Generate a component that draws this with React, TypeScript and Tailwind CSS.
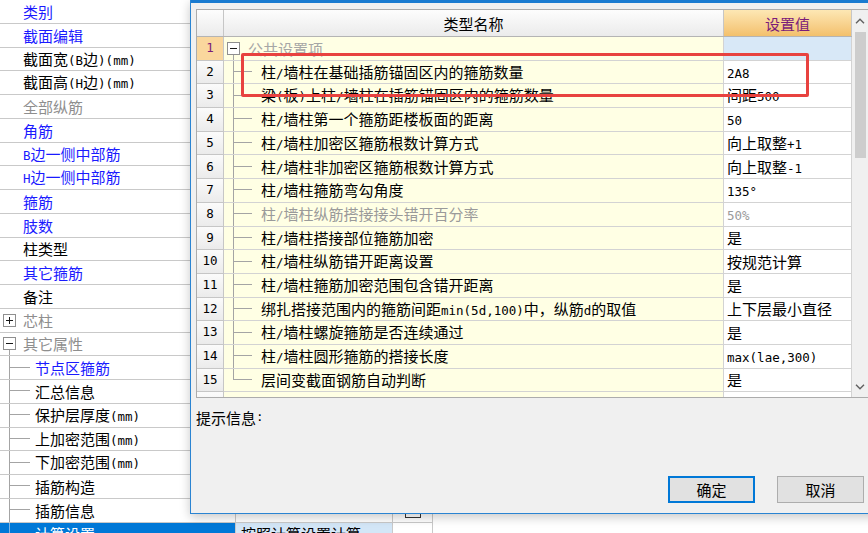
import React from 'react';

const MONO = "font-['DejaVu_Sans_Mono',monospace] text-[12.5px]";

function Mixed({ s }: { s: string }) {
  const parts = s.split(/([\x20-\x7e°]+)/).filter((p) => p !== '');
  return (
    <>
      {parts.map((p, i) =>
        /^[\x20-\x7e°]+$/.test(p) ? (
          <span key={i} className={MONO}>
            {p}
          </span>
        ) : (
          <span key={i}>{p}</span>
        )
      )}
    </>
  );
}

function ToggleBox({ plus, lineBelow, lineColor }: { plus?: boolean; lineBelow?: boolean; lineColor: string }) {
  return (
    <div className="flex h-full w-[13px] shrink-0 flex-col items-center">
      <div className="flex-1" />
      <svg width="13" height="13" viewBox="0 0 13 13" className="shrink-0">
        <rect x="0.5" y="0.5" width="12" height="12" fill="#ffffff" stroke="#8f8f8f" />
        <path d="M3 6.5h7" stroke="#1a1a1a" strokeWidth="1" />
        {plus && <path d="M6.5 3v7" stroke="#1a1a1a" strokeWidth="1" />}
      </svg>
      <div className={`w-px flex-1 ${lineBelow ? lineColor : ''}`} />
    </div>
  );
}

function Branch({ width, color, last }: { width: string; color: string; last?: boolean }) {
  return (
    <div className={`flex h-full shrink-0 flex-col ${width}`}>
      <div className={`h-1/2 border-b border-l ${color}`} />
      <div className={`flex-1 ${last ? '' : `border-l ${color}`}`} />
    </div>
  );
}

type LeftRow = {
  t: string;
  c?: 'blue' | 'black' | 'gray';
  box?: '+' | '-';
  child?: boolean;
  check?: boolean;
  selected?: boolean;
  value?: string;
};

const leftRows: LeftRow[] = [
  { t: '类别', c: 'blue' },
  { t: '截面编辑', c: 'blue' },
  { t: '截面宽(B边)(mm)', c: 'black' },
  { t: '截面高(H边)(mm)', c: 'black' },
  { t: '全部纵筋', c: 'gray' },
  { t: '角筋', c: 'blue' },
  { t: 'B边一侧中部筋', c: 'blue' },
  { t: 'H边一侧中部筋', c: 'blue' },
  { t: '箍筋', c: 'blue' },
  { t: '肢数', c: 'blue' },
  { t: '柱类型', c: 'black' },
  { t: '其它箍筋', c: 'blue' },
  { t: '备注', c: 'black' },
  { t: '芯柱', c: 'gray', box: '+' },
  { t: '其它属性', c: 'gray', box: '-' },
  { t: '节点区箍筋', c: 'blue', child: true },
  { t: '汇总信息', c: 'black', child: true },
  { t: '保护层厚度(mm)', c: 'black', child: true },
  { t: '上加密范围(mm)', c: 'black', child: true },
  { t: '下加密范围(mm)', c: 'black', child: true },
  { t: '插筋构造', c: 'black', child: true },
  { t: '插筋信息', c: 'black', child: true, check: true },
  { t: '计算设置', c: 'black', child: true, selected: true, value: '按照计算设置计算' },
];

const colorCls = {
  blue: 'text-[#1a1aff]',
  black: 'text-black',
  gray: 'text-[#8e8e8e]',
};

type DRow = { n: number; name: string; value: string; group?: boolean; dim?: boolean };

const dRows: DRow[] = [
  { n: 1, name: '公共设置项', value: '', group: true },
  { n: 2, name: '柱/墙柱在基础插筋锚固区内的箍筋数量', value: '2A8' },
  { n: 3, name: '梁(板)上柱/墙柱在插筋锚固区内的箍筋数量', value: '间距500' },
  { n: 4, name: '柱/墙柱第一个箍筋距楼板面的距离', value: '50' },
  { n: 5, name: '柱/墙柱加密区箍筋根数计算方式', value: '向上取整+1' },
  { n: 6, name: '柱/墙柱非加密区箍筋根数计算方式', value: '向上取整-1' },
  { n: 7, name: '柱/墙柱箍筋弯勾角度', value: '135°' },
  { n: 8, name: '柱/墙柱纵筋搭接接头错开百分率', value: '50%', dim: true },
  { n: 9, name: '柱/墙柱搭接部位箍筋加密', value: '是' },
  { n: 10, name: '柱/墙柱纵筋错开距离设置', value: '按规范计算' },
  { n: 11, name: '柱/墙柱箍筋加密范围包含错开距离', value: '是' },
  { n: 12, name: '绑扎搭接范围内的箍筋间距min(5d,100)中，纵筋d的取值', value: '上下层最小直径' },
  { n: 13, name: '柱/墙柱螺旋箍筋是否连续通过', value: '是' },
  { n: 14, name: '柱/墙柱圆形箍筋的搭接长度', value: 'max(lae,300)' },
  { n: 15, name: '层间变截面钢筋自动判断', value: '是' },
];

function Chevron({ up }: { up?: boolean }) {
  return (
    <svg width="10" height="6" viewBox="0 0 10 6">
      <path d={up ? 'M1 5.2L5 1.2L9 5.2' : 'M1 0.8L5 4.8L9 0.8'} fill="none" stroke="#606060" strokeWidth="1.4" />
    </svg>
  );
}

export default function App() {
  return (
    <div className="relative h-[533px] w-[868px] overflow-hidden bg-white text-[15px] leading-none text-black font-['Noto_Sans_CJK_SC',sans-serif]">
      {/* underlying property list */}
      <div className="flex w-[433px] flex-col">
        {leftRows.map((r, i) => {
          const lineColor = r.selected ? 'border-[#7fb3e3]' : 'border-[#a4a4a4]';
          return (
            <div key={i} className="flex h-[23.75px] shrink-0 border-b border-[#c9c9c9]">
              <div
                className={`flex h-full w-[236px] items-center border-r border-[#c9c9c9] ${
                  r.selected ? 'bg-[#0078d7] text-white' : colorCls[r.c ?? 'black']
                }`}
              >
                {r.box ? (
                  <>
                    <div className="w-[3px] shrink-0" />
                    <ToggleBox plus={r.box === '+'} lineBelow={r.box === '-'} lineColor="bg-[#a4a4a4]" />
                    <span className="ml-[7px] whitespace-nowrap">
                      <Mixed s={r.t} />
                    </span>
                  </>
                ) : r.child ? (
                  <>
                    <div className="w-[9px] shrink-0" />
                    <Branch width="w-[21px]" color={lineColor} />
                    <span className="ml-[5px] whitespace-nowrap">
                      <Mixed s={r.t} />
                    </span>
                  </>
                ) : (
                  <span className="pl-[23px] whitespace-nowrap">
                    <Mixed s={r.t} />
                  </span>
                )}
              </div>
              <div
                className={`flex h-full w-[157px] items-center border-r border-[#c9c9c9] pl-[5px] ${
                  r.selected ? 'bg-[#d3e6f7]' : ''
                }`}
              >
                {r.value && <span className="whitespace-nowrap">{r.value}</span>}
              </div>
              <div className="flex h-full w-[40px] items-center justify-center border-r border-[#c9c9c9]">
                {r.check && <div className="h-[16px] w-[16px] border border-[#333333] bg-white" />}
              </div>
            </div>
          );
        })}
      </div>

      {/* dialog */}
      <div className="absolute left-[190px] top-0 flex h-[514px] w-[690px] flex-col border-b border-l border-[#2a84d2] bg-[#f0f0f0] shadow-[0_3px_10px_rgba(0,0,0,0.22)]">
        <div className="h-[3px] shrink-0 bg-[#1a7bd0]" />
        <div className="ml-[5px] mt-[6px] flex h-[389px] w-[673px] shrink-0 border border-[#acacac] bg-white">
          <div className="flex w-[655px] flex-col">
            {/* header */}
            <div className="flex h-[27px] shrink-0 border-b border-[#b4b4b4]">
              <div className="h-full w-[27px] border-r border-[#c6c6c6] bg-gradient-to-b from-[#fdfdfd] to-[#ebebeb]" />
              <div className="flex h-full w-[500px] items-center justify-center border-r border-[#c6c6c6] bg-gradient-to-b from-[#fdfdfd] to-[#ebebeb]">
                类型名称
              </div>
              <div className="flex h-full w-[128px] items-center justify-center border-r border-[#c6c6c6] bg-gradient-to-b from-[#fde7b4] to-[#f3c06c] text-[#7a1c7a]">
                设置值
              </div>
            </div>
            {/* rows */}
            <div className="flex h-[360px] flex-col overflow-hidden">
              {[...dRows, null].map((r, i) => (
                <div key={i} className="flex h-[23.7px] shrink-0">
                  <div
                    className={`flex h-full w-[27px] items-center justify-center border-b border-r border-[#c6c6c6] ${
                      r && r.n === 1
                        ? 'bg-[#fad79d] text-[#7a1c7a]'
                        : 'bg-gradient-to-b from-[#fbfbfb] to-[#ebebeb]'
                    }`}
                  >
                    {r && <span className={MONO}>{r.n}</span>}
                  </div>
                  <div className="flex h-full w-[500px] items-center border-b border-r border-[#d3d3d3] bg-[#ffffe4]">
                    {r && r.group ? (
                      <>
                        <div className="w-[3px] shrink-0" />
                        <ToggleBox lineBelow lineColor="bg-[#a4a4a4]" />
                        <span className="ml-[8px] whitespace-nowrap text-[#a6a6a6]">{r.name}</span>
                      </>
                    ) : r ? (
                      <>
                        <div className="w-[9px] shrink-0" />
                        <Branch width="w-[19px]" color="border-[#a4a4a4]" last={r.n === 15} />
                        <span className={`ml-[9px] whitespace-nowrap ${r.dim ? 'text-[#9a9a9a]' : ''}`}>
                          <Mixed s={r.name} />
                        </span>
                      </>
                    ) : null}
                  </div>
                  <div
                    className={`flex h-full w-[128px] items-center border-b border-r border-[#d3d3d3] pl-[3px] ${
                      r && r.group ? 'bg-[#d8e8f7]' : 'bg-white'
                    } ${r && r.dim ? 'text-[#9a9a9a]' : ''}`}
                  >
                    {r && (
                      <span className="whitespace-nowrap">
                        <Mixed s={r.value} />
                      </span>
                    )}
                  </div>
                </div>
              ))}
            </div>
          </div>
          {/* scrollbar */}
          <div className="flex w-[17px] flex-col bg-[#f0f0f0]">
            <div className="flex h-[22px] shrink-0 items-center justify-center">
              <Chevron up />
            </div>
            <div className="ml-[3px] h-[126px] w-[11px] shrink-0 bg-[#cdcdcd]" />
            <div className="flex-1" />
            <div className="flex h-[20px] shrink-0 items-center justify-center">
              <Chevron />
            </div>
          </div>
        </div>
        <div className="ml-[5px] mt-[9px] flex h-[20px] items-center whitespace-nowrap">
          提示信息<span className={MONO}>:</span>
        </div>
        <div className="mr-[16px] mt-[49px] flex justify-end gap-[22px]">
          <button className="flex h-[27px] w-[87px] items-center justify-center border-2 border-[#0078d7] bg-[#e1e1e1]">
            确定
          </button>
          <button className="flex h-[27px] w-[87px] items-center justify-center border border-[#adadad] bg-[#e1e1e1]">
            取消
          </button>
        </div>
      </div>

      {/* annotation */}
      <div className="absolute left-[241px] top-[53px] h-[44px] w-[568px] rounded-[2px] border-[3px] border-[#e8423f]" />
    </div>
  );
}
